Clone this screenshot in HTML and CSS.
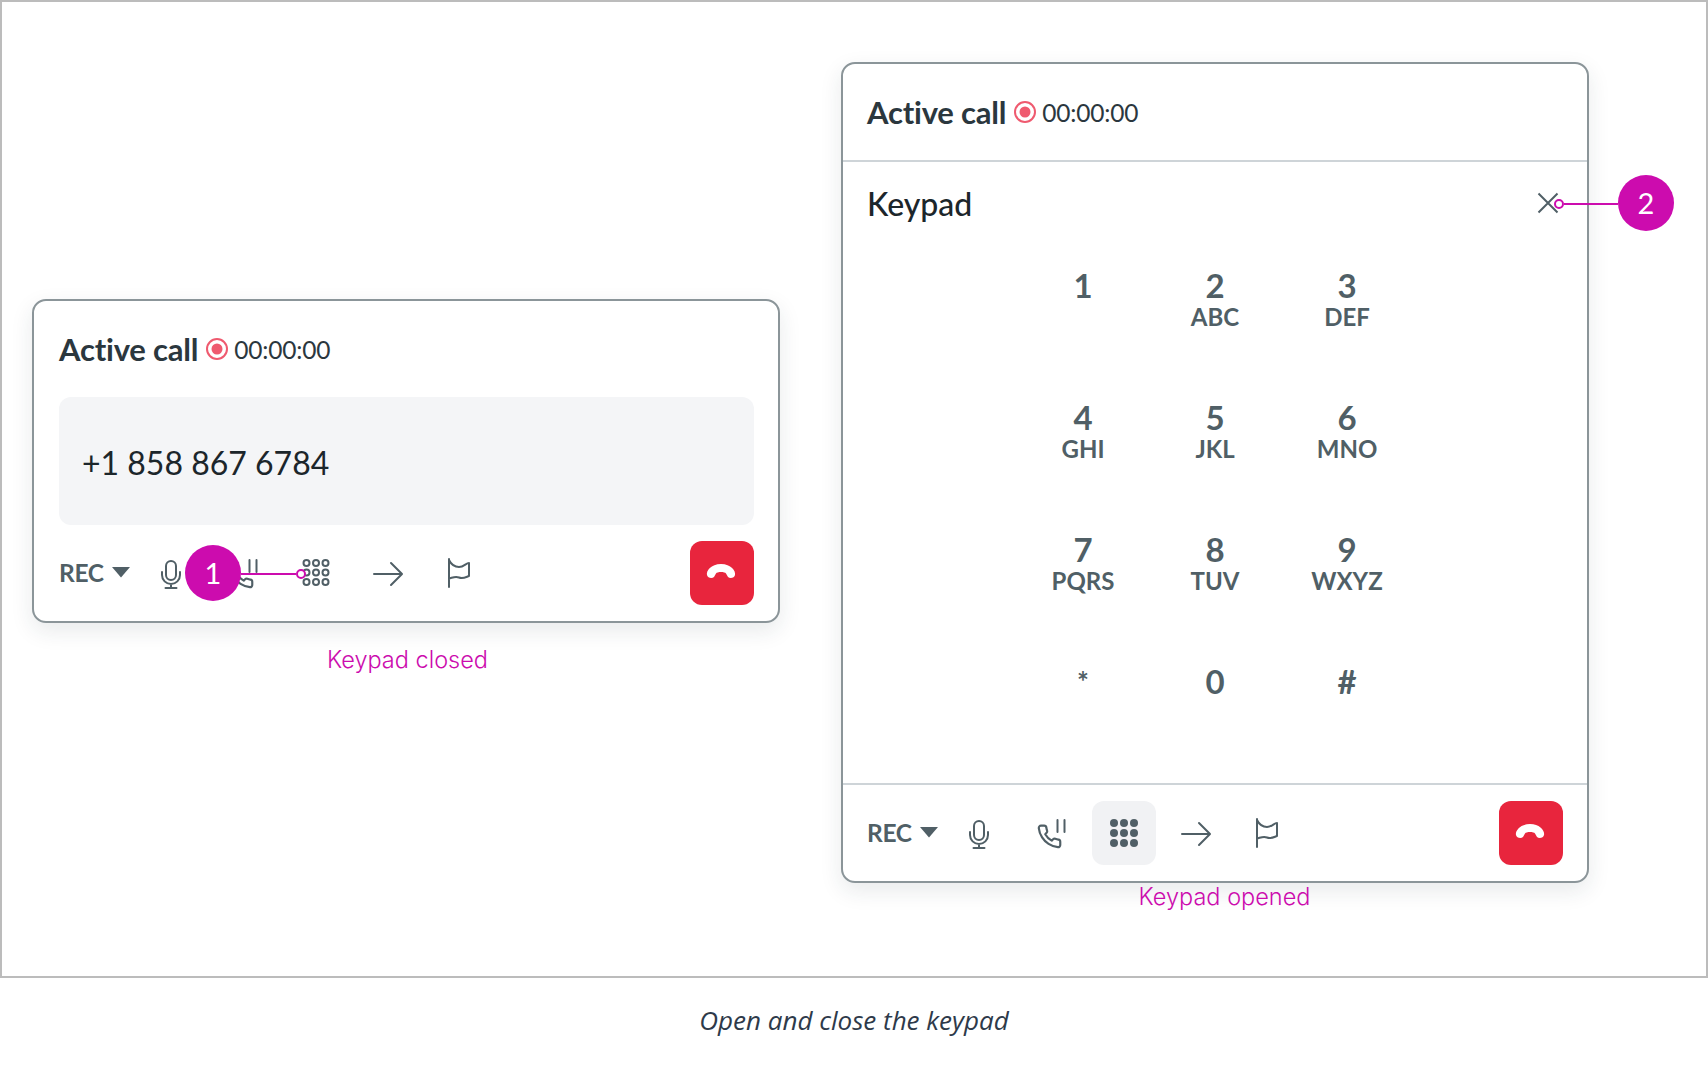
FILE: index.html
```html
<!DOCTYPE html>
<html lang="en">
<head>
<meta charset="utf-8">
<title>Open and close the keypad</title>
<link rel="stylesheet" href="styles.css">
</head>
<body>
<svg class="defs" width="0" height="0" aria-hidden="true">
  <symbol id="i-mic" viewBox="0 0 32 32"><rect x="11" y="4" width="10" height="19" rx="5"/><path d="M7 15v3a9 9 0 0 0 18 0v-3M16 27v4M10.500 31h11"/></symbol>
  <symbol id="i-hold" viewBox="0 0 32 32"><path transform="translate(.5 6.500) scale(1.08)" d="M22 16.920v3a2 2 0 0 1-2.180 2 19.790 19.790 0 0 1-8.630-3.070 19.500 19.500 0 0 1-6-6 19.790 19.790 0 0 1-3.070-8.670A2 2 0 0 1 4.110 2h3a2 2 0 0 1 2 1.720 12.840 12.840 0 0 0 .7 2.810 2 2 0 0 1-.45 2.110L8.090 9.910a16 16 0 0 0 6 6l1.270-1.270a2 2 0 0 1 2.110-.45 12.840 12.840 0 0 0 2.810.7A2 2 0 0 1 22 16.920z"/><path d="M21.500 3v12M28.500 3v12"/></symbol>
  <symbol id="i-arrow" viewBox="0 0 32 32"><path d="M2 17h27M19 6l11 11-11 11"/></symbol>
  <symbol id="i-flag" viewBox="0 0 32 32"><path d="M7 2v28M7 3c2 4 5 7 10 7s7-4 10-4v13c-3 1-6 3-10 1.500s-7 .5-10 1"/></symbol>
  <symbol id="i-hangup" viewBox="0 0 32 20"><path d="M2 14C1 10 6 3 16 3s15 7 14 11c-.5 3-5 4-7 2l-2-3.500c-1-2-9-2-10 0L9 16c-2 2-6.500 1-7-2z"/></symbol>
  <symbol id="i-rec" viewBox="0 0 24 24"><circle class="rec-ring" cx="12" cy="12" r="10"/><circle class="rec-dot" cx="12" cy="12" r="5.500"/></symbol>
  <symbol id="i-close" viewBox="0 0 22 22"><path d="M1.500 1.500l19 19M20.500 1.500l-19 19"/></symbol>
  <symbol id="i-caret" viewBox="0 0 18 12"><path d="M0 1h18L9 11.500z"/></symbol>
  <symbol id="i-grid-line" viewBox="0 0 32 32"><g><circle cx="6.500" cy="6" r="3"/><circle cx="16" cy="6" r="3"/><circle cx="25.500" cy="6" r="3"/><circle cx="6.500" cy="15.500" r="3"/><circle cx="16" cy="15.500" r="3"/><circle cx="25.500" cy="15.500" r="3"/><circle cx="6.500" cy="25" r="3"/><circle cx="16" cy="25" r="3"/><circle cx="25.500" cy="25" r="3"/></g></symbol>
  <symbol id="i-grid-fill" viewBox="0 0 32 32"><g><circle cx="6" cy="6" r="4"/><circle cx="16" cy="6" r="4"/><circle cx="26" cy="6" r="4"/><circle cx="6" cy="16" r="4"/><circle cx="16" cy="16" r="4"/><circle cx="26" cy="16" r="4"/><circle cx="6" cy="26" r="4"/><circle cx="16" cy="26" r="4"/><circle cx="26" cy="26" r="4"/></g></symbol>
</svg>

<main class="frame">
  <section class="col col-closed">
    <div class="card card-closed">
      <header class="call-head call-head-closed">
        <h2 class="call-title">Active call</h2>
        <svg class="rec-icon"><use href="#i-rec"/></svg>
        <span class="call-time">00:00:00</span>
      </header>
      <div class="number">+1 858 867 6784</div>
      <div class="toolbar">
        <button class="rec-btn">REC<svg class="caret"><use href="#i-caret"/></svg></button>
        <button class="tool"><svg class="ico ico-mic"><use href="#i-mic"/></svg></button>
        <button class="tool"><svg class="ico"><use href="#i-hold"/></svg></button>
        <button class="tool"><svg class="ico"><use href="#i-grid-line"/></svg></button>
        <button class="tool"><svg class="ico"><use href="#i-arrow"/></svg></button>
        <button class="tool"><svg class="ico ico-flag"><use href="#i-flag"/></svg></button>
        <button class="hangup"><svg class="hangup-ico"><use href="#i-hangup"/></svg></button>
      </div>
    </div>
    <p class="note note-closed">Keypad closed</p>
    <div class="callout callout-1">
      <span class="badge">1</span><span class="lead lead-1"></span><span class="ring"></span>
    </div>
  </section>

  <section class="col col-open">
    <div class="card card-open">
      <header class="call-head call-head-open">
        <h2 class="call-title">Active call</h2>
        <svg class="rec-icon"><use href="#i-rec"/></svg>
        <span class="call-time">00:00:00</span>
      </header>
      <div class="keypad-head">
        <h3 class="keypad-title">Keypad</h3>
        <svg class="close"><use href="#i-close"/></svg>
      </div>
      <div class="keys">
        <div class="key"><b>1</b></div>
        <div class="key"><b>2</b><span>ABC</span></div>
        <div class="key"><b>3</b><span>DEF</span></div>
        <div class="key"><b>4</b><span>GHI</span></div>
        <div class="key"><b>5</b><span>JKL</span></div>
        <div class="key"><b>6</b><span>MNO</span></div>
        <div class="key"><b>7</b><span>PQRS</span></div>
        <div class="key"><b>8</b><span>TUV</span></div>
        <div class="key"><b>9</b><span>WXYZ</span></div>
        <div class="key"><b class="star">*</b></div>
        <div class="key"><b>0</b></div>
        <div class="key"><b>#</b></div>
      </div>
      <div class="toolbar toolbar-open">
        <button class="rec-btn">REC<svg class="caret"><use href="#i-caret"/></svg></button>
        <button class="tool"><svg class="ico ico-mic"><use href="#i-mic"/></svg></button>
        <button class="tool"><svg class="ico"><use href="#i-hold"/></svg></button>
        <button class="tool tool-active"><svg class="ico ico-grid-fill"><use href="#i-grid-fill"/></svg></button>
        <button class="tool"><svg class="ico"><use href="#i-arrow"/></svg></button>
        <button class="tool"><svg class="ico ico-flag"><use href="#i-flag"/></svg></button>
        <button class="hangup"><svg class="hangup-ico"><use href="#i-hangup"/></svg></button>
      </div>
    </div>
    <p class="note note-open">Keypad opened</p>
    <div class="callout callout-2">
      <span class="ring"></span><span class="lead lead-2"></span><span class="badge">2</span>
    </div>
  </section>
</main>

<p class="figcaption">Open and close the keypad</p>
</body>
</html>
```
FILE: styles.css
```css
* { box-sizing: border-box; }
html, body { margin: 0; padding: 0; background: #fff; }
body { font-family: "Lato", "Liberation Sans", sans-serif; color: #2b373e; }
.defs { position: absolute; }

.frame {
  display: flex;
  height: 978px;
  border: 2px solid #bcbcbc;
  padding-left: 30px;
  gap: 61px;
}

.col { position: relative; display: flex; flex-direction: column; }
.col-closed { width: 748px; padding-top: 297px; }
.col-open { width: 748px; padding-top: 60px; }

.card {
  background: #fff;
  border: 2px solid #8b9599;
  border-radius: 14px;
  box-shadow: 0 8px 22px rgba(30, 45, 55, .10);
}
.card-closed { height: 324px; padding: 0 24px 0 25px; }
.card-open { height: 821px; }

.call-head { display: flex; align-items: center; }
.call-head-closed { height: 96px; }
.call-head-open { height: 98px; padding: 0 24px; border-bottom: 2px solid #ced4d8; }
.call-title { margin: 0; font-size: 31px; font-weight: 700; color: #2b373e; letter-spacing: -.2px; }
.rec-icon { width: 24px; height: 24px; margin: 0 5px 0 7px; flex: none; }
.rec-ring { fill: none; stroke: #ef5a6f; stroke-width: 2; }
.rec-dot { fill: #ef5a6f; }
.call-time { font-size: 24.500px; color: #2b373e; letter-spacing: -.2px; }

.number {
  display: flex;
  align-items: center;
  height: 128px;
  padding: 2px 0 0 23px;
  border-radius: 12px;
  background: #f4f5f7;
  font-size: 32px;
  color: #1c262b;
}

.toolbar { display: flex; align-items: center; gap: 8px; margin-top: 16px; }
.toolbar-open { margin-top: 0; height: 98px; padding: 0 24px; border-top: 2px solid #ced4d8; }

button { border: 0; padding: 0; background: none; font: inherit; }
.rec-btn {
  width: 73px;
  display: flex;
  align-items: center;
  margin-bottom: 2px;
  font-size: 24.500px;
  font-weight: 700;
  color: #505f66;
  letter-spacing: -.3px;
}
.caret { width: 18px; height: 12px; margin-left: 8px; fill: #505f66; }
.tool {
  width: 64px;
  height: 64px;
  display: flex;
  align-items: center;
  justify-content: center;
  border-radius: 12px;
}
.tool-active { background: #f1f2f4; }
.ico { width: 32px; height: 32px; fill: none; stroke: #505f66; stroke-width: 2; stroke-linecap: round; stroke-linejoin: round; }
.ico-mic { margin-right: 3px; }
.ico-flag { margin-right: 4px; }
.ico-grid-fill { fill: #505f66; stroke: none; }

.hangup {
  width: 64px;
  height: 64px;
  margin-left: auto;
  display: flex;
  align-items: center;
  justify-content: center;
  border-radius: 12px;
  background: #e8253d;
}
.hangup-ico { width: 32px; height: 20px; fill: #fff; margin: 0 3px 5px 0; }

.keypad-head { display: flex; align-items: center; justify-content: space-between; height: 86px; padding: 0 28px 0 24px; }
.keypad-title { margin: 0 0 4px; font-size: 32px; font-weight: 500; color: #1c262b; }
.close { width: 22px; height: 22px; margin-bottom: 4px; fill: none; stroke: #505f66; stroke-width: 2; }

.keys {
  display: grid;
  grid-template-columns: repeat(3, 132px);
  grid-auto-rows: 132px;
  justify-content: center;
  height: 533px;
  margin-top: 2px;
}
.key { display: flex; flex-direction: column; align-items: center; padding-top: 17px; color: #505f66; }
.key b { font-size: 33px; font-weight: 700; line-height: 36px; }
.key span { font-size: 24px; font-weight: 700; line-height: 28px; }
.key .star { font-size: 28px; }

.note { margin: 0; font-family: "Inter", sans-serif; font-weight: 300; font-size: 23.500px; color: #cc0cae; text-align: center; }
.note-closed { margin-top: 22px; padding-left: 3px; }
.note-open { margin-top: -1px; padding-left: 19px; }

.callout { position: absolute; display: flex; align-items: center; }
.callout-1 { left: 153px; top: 543px; }
.callout-2 { left: 713px; top: 173px; }
.badge {
  width: 56px;
  height: 56px;
  padding-bottom: 2px;
  border-radius: 50%;
  background: #cc0cae;
  color: #fff;
  font-size: 29px;
  display: flex;
  align-items: center;
  justify-content: center;
  flex: none;
}
.lead { height: 2px; margin-top: 2px; background: #cc0cae; display: block; }
.lead-1 { width: 55px; }
.lead-2 { width: 54px; }
.ring { width: 10px; height: 10px; margin-top: 2px; border: 2px solid #cc0cae; border-radius: 50%; background: #fff; flex: none; }

.figcaption {
  margin: 24px 0 0;
  text-align: center;
  font-family: "Open Sans", sans-serif;
  font-style: italic;
  font-size: 26px;
  color: #2e3a4a;
}
```
